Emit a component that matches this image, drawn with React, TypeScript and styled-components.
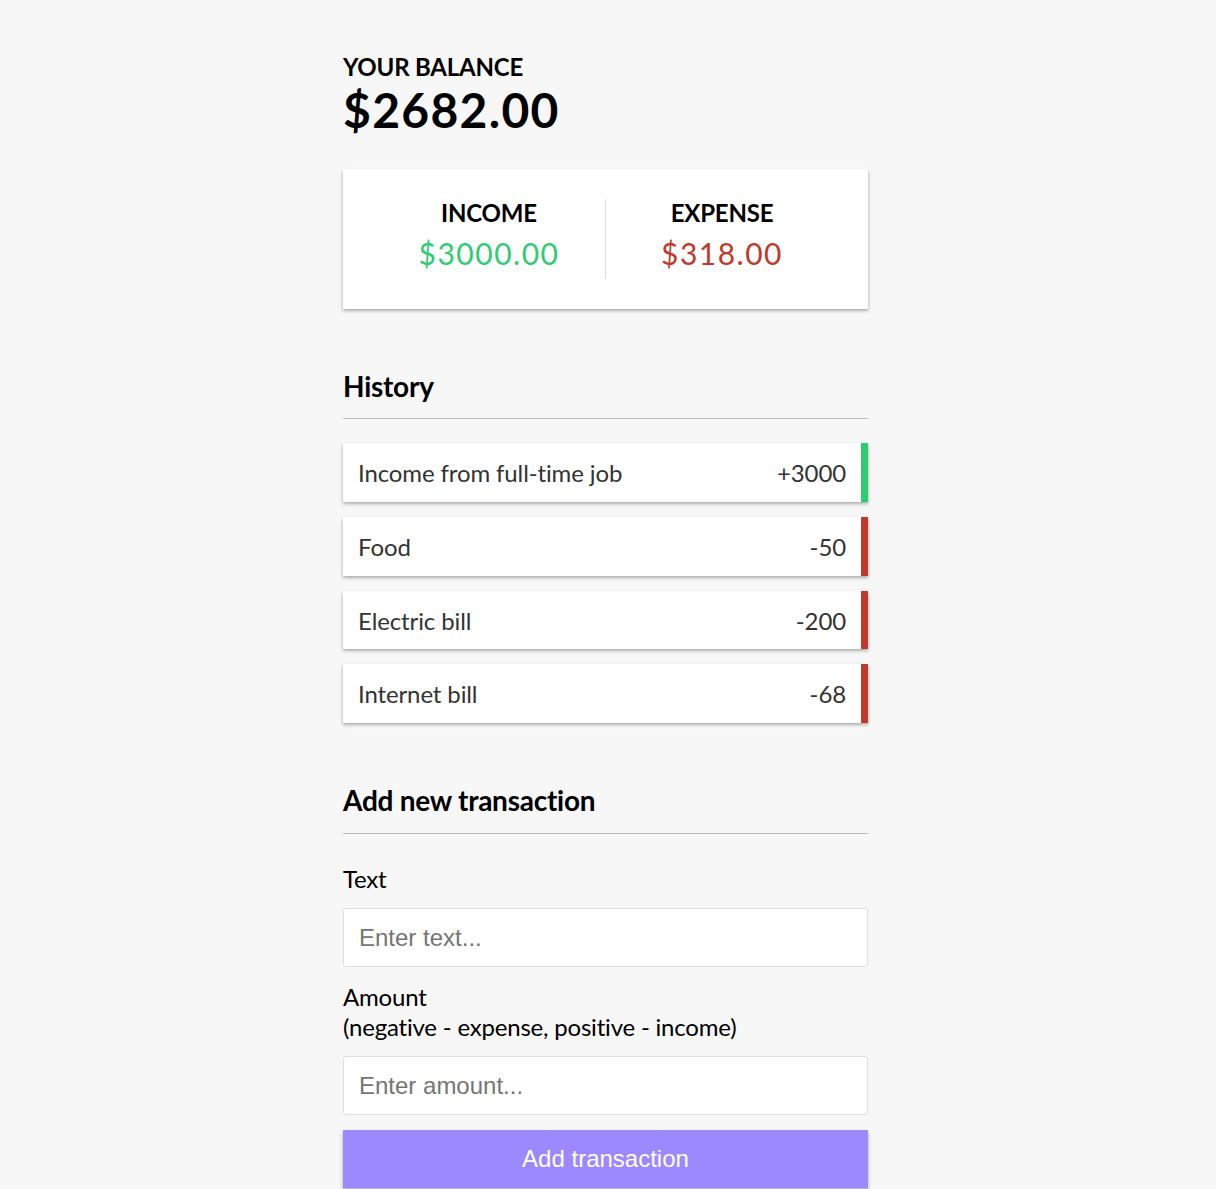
import React from "react";
import styled, { createGlobalStyle } from "styled-components";

const shadow = "0 1.5px 4.5px rgba(0,0,0,0.12), 0 1.5px 3px rgba(0,0,0,0.24)";

const Global = createGlobalStyle`
  * { box-sizing: border-box; }
  body {
    margin: 0;
    padding-right: 5px;
    background-color: #f7f7f7;
    font-family: Lato, "Liberation Sans", sans-serif;
  }
`;

const Container = styled.div`
  width: 525px;
  margin: 52.5px auto 45px;
`;

const Caps = styled.h4`
  margin: 0;
  font-size: 24px;
  font-weight: 700;
  text-transform: uppercase;
  line-height: 28.8px;
  letter-spacing: -0.2px;
  color: #000;
`;

const Balance = styled.h1`
  margin: 0;
  padding-top: 1px;
  font-size: 48px;
  line-height: 56.7px;
  letter-spacing: 1.3px;
  font-weight: 700;
  color: #000;
`;

const IncExp = styled.div`
  background: #fff;
  box-shadow: ${shadow};
  padding: 30px;
  display: flex;
  justify-content: space-between;
  margin: 30px 0;
`;

const Half = styled.div<{ $divider?: boolean }>`
  flex: 1;
  text-align: center;
  border-right: ${(p) => (p.$divider ? "1.5px solid #dedede" : "none")};
`;

const Money = styled.p<{ $plus?: boolean }>`
  font-size: 30px;
  line-height: 36px;
  letter-spacing: 1.5px;
  margin: 7.5px 0;
  color: ${(p) => (p.$plus ? "#2ecc71" : "#c0392b")};
`;

const SectionTitle = styled.h3`
  font-size: 28px;
  line-height: 34.3px;
  font-weight: 700;
  letter-spacing: -0.25px;
  color: #000;
  border-bottom: 1.5px solid #bbb;
  padding-bottom: 15px;
  margin: 60px 0 15px;
`;

const List = styled.ul`
  list-style: none;
  padding: 0;
  margin: 24px 0 60px;
`;

const Item = styled.li<{ $plus?: boolean }>`
  background: #fff;
  box-shadow: ${shadow};
  color: #333;
  display: flex;
  justify-content: space-between;
  padding: 16px 15px 14px;
  margin: 15px 0;
  font-size: 24px;
  line-height: 28.8px;
  letter-spacing: -0.12px;
  border-right: 7.5px solid ${(p) => (p.$plus ? "#2ecc71" : "#c0392b")};
`;

const FormControl = styled.div``;

const Label = styled.label`
  display: inline-block;
  margin: 15px 0;
  font-size: 24px;
  line-height: 29.2px;
  letter-spacing: -0.2px;
  color: #000;
`;

const Input = styled.input`
  display: block;
  width: 100%;
  border: 1.5px solid #dedede;
  border-radius: 3px;
  font-family: "Liberation Sans", Arial, sans-serif;
  font-size: 24px;
  line-height: 27.6px;
  padding: 15px;
  background: #fff;
  outline: none;
  &::placeholder { color: #757575; }
`;

const Button = styled.button`
  cursor: pointer;
  display: block;
  width: 100%;
  background-color: #9c88ff;
  box-shadow: ${shadow};
  color: #fff;
  border: 0;
  font-family: "Liberation Sans", Arial, sans-serif;
  font-size: 24px;
  line-height: 27.6px;
  margin: 15px 0 45px;
  padding: 15px;
`;

const transactions = [
  { text: "Income from full-time job", amount: 3000 },
  { text: "Food", amount: -50 },
  { text: "Electric bill", amount: -200 },
  { text: "Internet bill", amount: -68 },
];

export default function App() {
  return (
    <>
      <Global />
      <Container>
        <Caps>Your Balance</Caps>
        <Balance>$2682.00</Balance>
        <IncExp>
          <Half $divider>
            <Caps>Income</Caps>
            <Money $plus>$3000.00</Money>
          </Half>
          <Half>
            <Caps>Expense</Caps>
            <Money>$318.00</Money>
          </Half>
        </IncExp>
        <SectionTitle>History</SectionTitle>
        <List>
          {transactions.map((t) => (
            <Item key={t.text} $plus={t.amount > 0}>
              {t.text}
              <span>{t.amount > 0 ? `+${t.amount}` : `${t.amount}`}</span>
            </Item>
          ))}
        </List>
        <SectionTitle>Add new transaction</SectionTitle>
        <form onSubmit={(e) => e.preventDefault()}>
          <FormControl>
            <Label htmlFor="text">Text</Label>
            <Input type="text" id="text" placeholder="Enter text..." />
          </FormControl>
          <FormControl>
            <Label htmlFor="amount">
              Amount <br />
              (negative - expense, positive - income)
            </Label>
            <Input type="number" id="amount" placeholder="Enter amount..." />
          </FormControl>
          <Button>Add transaction</Button>
        </form>
      </Container>
    </>
  );
}
